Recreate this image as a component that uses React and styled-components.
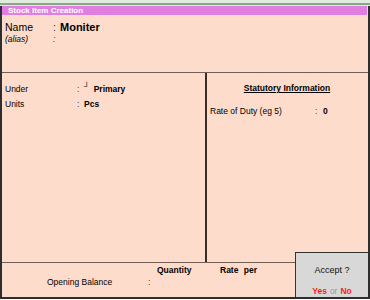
import React from "react";
import styled, { createGlobalStyle } from "styled-components";

const GlobalStyle = createGlobalStyle`
  html, body {
    margin: 0;
    padding: 0;
    background: #ffffff;
  }
  body {
    font-family: "Liberation Sans", Arial, sans-serif;
  }
`;

const Screen = styled.div`
  width: 370px;
  height: 300px;
  display: flex;
  flex-direction: column;
  overflow: hidden;
`;

const TopStrip = styled.div`
  height: 3px;
  background: #e0ecde;
  border-bottom: 2px solid #8aa888;
  flex: none;
`;

const Gap = styled.div`
  height: 1px;
  background: #fedccb;
  flex: none;
`;

const Window = styled.div`
  position: relative;
  flex: 1;
  display: flex;
  flex-direction: column;
  border-left: 2px solid #2e2e2e;
  border-right: 2px solid #2e2e2e;
  border-bottom: 2px solid #2e2e2e;
  background: #fedccb;
  margin-bottom: 1px;
`;

const TitleBar = styled.div`
  height: 9px;
  flex: none;
  background: #e07fe0;
  color: #ffffff;
  font-size: 8px;
  font-weight: bold;
  line-height: 9px;
  padding-left: 6px;
  margin-right: 1px;
`;

const Header = styled.div`
  height: 57px;
  flex: none;
  padding: 5px 0 0 3px;
  box-sizing: border-box;
`;

const Row = styled.div`
  display: flex;
  align-items: center;
  height: ${(p) => p.$h}px;
  font-size: ${(p) => p.$size}px;
  font-style: ${(p) => (p.$italic ? "italic" : "normal")};
  color: #000;
`;

const Label = styled.span`
  width: ${(p) => p.$w}px;
  flex: none;
`;

const Colon = styled.span`
  width: ${(p) => p.$w || 7}px;
  flex: none;
  color: #333;
`;

const Value = styled.span`
  font-weight: bold;
`;

const Divider = styled.div`
  height: 1px;
  background: #6f5f55;
  flex: none;
`;

const Middle = styled.div`
  flex: 1;
  display: flex;
`;

const LeftPanel = styled.div`
  width: 205px;
  flex: none;
  border-right: 2px solid #3a2c24;
  padding: 8px 0 0 3px;
  box-sizing: border-box;
`;

const RightPanel = styled.div`
  flex: 1;
  padding: 9px 0 0 3px;
  box-sizing: border-box;
`;

const SectionTitle = styled.div`
  font-size: 8.5px;
  font-weight: bold;
  text-decoration: underline;
  text-align: center;
  line-height: 13px;
  padding-right: 4px;
  margin-bottom: 9px;
`;

const Corner = styled.span`
  font-size: 8px;
  margin-right: 4px;
  position: relative;
  top: -2px;
`;

const Footer = styled.div`
  height: 34px;
  flex: none;
`;

const ColumnHeads = styled.div`
  display: flex;
  padding-left: 155px;
  font-size: 8.5px;
  font-weight: bold;
  height: 11px;
  align-items: center;
  margin-top: 1px;
`;

const Head = styled.span`
  width: ${(p) => p.$w}px;
  flex: none;
  word-spacing: ${(p) => p.$ws || 0}px;
`;

const OpeningRow = styled.div`
  display: flex;
  align-items: center;
  padding-left: 45px;
  font-size: 8.5px;
  height: 13px;
`;

const AcceptBox = styled.div`
  position: absolute;
  right: 0;
  bottom: 0;
  width: 72px;
  height: 44px;
  background: #d8d8d8;
  border-top: 1px solid #333;
  border-left: 1px solid #333;
  display: flex;
  flex-direction: column;
  align-items: center;
  font-size: 9px;
`;

const AcceptTitle = styled.div`
  margin-top: 12px;
  color: #111;
`;

const Choices = styled.div`
  margin-top: 11px;
  font-size: 8.5px;
`;

const Choice = styled.span`
  color: #ff1a1a;
  font-weight: bold;
`;

const Or = styled.span`
  color: #999;
  margin: 0 3px;
`;

export default function App() {
  return (
    <>
      <GlobalStyle />
      <Screen>
        <TopStrip />
        <Gap />
        <Window>
          <TitleBar>Stock Item Creation</TitleBar>
          <Header>
            <Row $h={13} $size={10.5}>
              <Label $w={48}>Name</Label>
              <Colon>:</Colon>
              <Value style={{ fontSize: 11 }}>Moniter</Value>
            </Row>
            <Row $h={11} $size={8.5} $italic>
              <Label $w={48}>(alias)</Label>
              <Colon>:</Colon>
            </Row>
          </Header>
          <Divider />
          <Middle>
            <LeftPanel>
              <Row $h={15} $size={8.5}>
                <Label $w={72}>Under</Label>
                <Colon $w={7}>:</Colon>
                <Corner>┘</Corner>
                <Value>Primary</Value>
              </Row>
              <Row $h={15} $size={8.5}>
                <Label $w={72}>Units</Label>
                <Colon $w={7}>:</Colon>
                <Value>Pcs</Value>
              </Row>
            </LeftPanel>
            <RightPanel>
              <SectionTitle>Statutory Information</SectionTitle>
              <Row $h={14} $size={8.5}>
                <Label $w={105}>Rate of Duty (eg 5)</Label>
                <Colon $w={8}>:</Colon>
                <Value>0</Value>
              </Row>
            </RightPanel>
          </Middle>
          <Divider />
          <Footer>
            <ColumnHeads>
              <Head $w={63}>Quantity</Head>
              <Head $w={50} $ws={3}>Rate per</Head>
            </ColumnHeads>
            <OpeningRow>
              <Label $w={101}>Opening Balance</Label>
              <Colon>:</Colon>
            </OpeningRow>
          </Footer>
          <AcceptBox>
            <AcceptTitle>Accept ?</AcceptTitle>
            <Choices>
              <Choice>Yes</Choice>
              <Or>or</Or>
              <Choice>No</Choice>
            </Choices>
          </AcceptBox>
        </Window>
      </Screen>
    </>
  );
}
